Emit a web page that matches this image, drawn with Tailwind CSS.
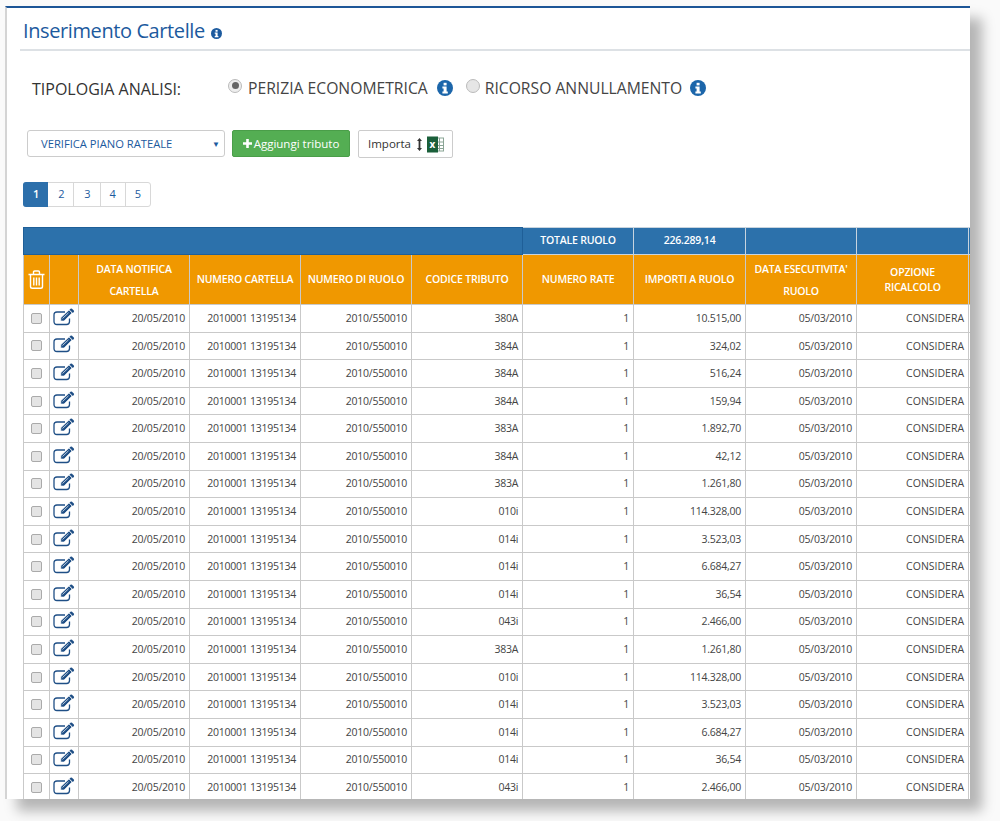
<!DOCTYPE html>
<html lang="it">
<head>
    <meta charset="UTF-8">
    <meta name="viewport" content="width=device-width, initial-scale=1.0">
    <title>Inserimento Cartelle</title>
    <script src="https://cdn.jsdelivr.net/npm/@tailwindcss/browser@4"></script>
</head>
<body class="bg-[#fafafa] h-[821px] overflow-hidden font-['Open_Sans',sans-serif] text-[#333]">

    <!-- Card -->
    <main class="ml-[5px] mt-[6px] w-[965px] h-[793px] bg-white border-l-2 border-l-[#d4d4d4] border-t-2 border-t-[#1c5596] overflow-hidden shadow-[12px_12px_12px_rgba(0,0,0,0.28)]">

        <!-- Title -->
        <header class="ml-[13px] h-[43px] border-b-2 border-[#dde1e5] flex items-center pl-[3px] pt-[5px] gap-[6px]">
            <h1 class="text-[20px] leading-none font-medium tracking-[-0.4px] text-[#1c5a9e]">Inserimento Cartelle</h1>
            <svg class="w-[11px] h-[11px] mt-[4px]" viewBox="0 0 16 16"><circle cx="8" cy="8" r="8" fill="#1c5a9e"/><rect x="6.6" y="2.8" width="3" height="2.6" fill="#fff"/><path d="M5.4 6.6h4.2v5h1.2v1.8H5.4v-1.8h1.2V8.4H5.4z" fill="#fff"/></svg>
        </header>

        <!-- Tipologia -->
        <section class="flex items-center h-[30px] mt-[23px] text-[15.7px] leading-none">
            <span class="ml-[25px] w-[196px] text-[16px] font-medium text-[#333]">TIPOLOGIA ANALISI:</span>
            <span class="w-[14px] h-[14px] -mt-[7px] rounded-full border border-[#bbb] bg-[#eee] flex items-center justify-center"><span class="w-[7px] h-[7px] rounded-full bg-[#666]"></span></span>
            <span class="ml-[6px] text-[#444]">PERIZIA ECONOMETRICA</span>
            <svg class="w-[16px] h-[16px] ml-[9px] -mt-[3px]" viewBox="0 0 16 16"><circle cx="8" cy="8" r="8" fill="#1c66aa"/><rect x="6.6" y="2.8" width="3" height="2.6" fill="#fff"/><path d="M5.4 6.6h4.2v5h1.2v1.8H5.4v-1.8h1.2V8.4H5.4z" fill="#fff"/></svg>
            <span class="ml-[13px] w-[14px] h-[14px] -mt-[7px] rounded-full border border-[#bbb] bg-[#e6e6e6]"></span>
            <span class="ml-[5px] text-[#444]">RICORSO ANNULLAMENTO</span>
            <svg class="w-[16px] h-[16px] ml-[8px] -mt-[3px]" viewBox="0 0 16 16"><circle cx="8" cy="8" r="8" fill="#1c66aa"/><rect x="6.6" y="2.8" width="3" height="2.6" fill="#fff"/><path d="M5.4 6.6h4.2v5h1.2v1.8H5.4v-1.8h1.2V8.4H5.4z" fill="#fff"/></svg>
        </section>

        <!-- Toolbar -->
        <section class="flex items-start mt-[26px] ml-[20px]">
            <div class="w-[198px] h-[27px] border border-[#ccc] rounded-[3px] flex items-center justify-between pl-[13px] pr-[4px] text-[11.2px] text-[#1c5a9e]">
                <span class="pt-[1px]">VERIFICA PIANO RATEALE</span>
                <span class="text-[8px] text-[#1c5a9e]">▼</span>
            </div>
            <button class="ml-[7px] w-[118px] h-[27px] bg-[#54ae53] border border-[#4a9e49] rounded-[2px] text-white text-[11.5px] flex items-center justify-center gap-[2px]">
                <svg class="w-[9px] h-[9px]" viewBox="0 0 9 9"><path d="M3.2 0h2.6v3.2H9v2.6H5.8V9H3.2V5.8H0V3.2h3.2z" fill="#fff"/></svg>
                Aggiungi tributo
            </button>
            <button class="ml-[8px] w-[95px] h-[28px] bg-white border border-[#ccc] rounded-[2px] text-[11.5px] text-[#333] flex items-center pl-[9px]">
                Importa
                <svg class="w-[5px] h-[13px] ml-[6px]" viewBox="0 0 5 13"><path d="M2.5 0L5 3H3.4v7H5l-2.500 3L0 10h1.600V3H0z" fill="#333"/></svg>
                <svg class="w-[17px] h-[17px] ml-[5px]" viewBox="0 0 17 17">
                    <rect x="8" y="2" width="8.500" height="13" fill="#fff" stroke="#8aa595"/>
                    <path d="M12.500 2v13M8 6h8.500M8 9.500h8.500M8 12.500h8.500" stroke="#8aa595" stroke-width="1"/>
                    <rect x="0" y="0.500" width="11" height="16" fill="#1a5f3a"/>
                    <text x="5.500" y="12" text-anchor="middle" font-size="10" font-weight="700" fill="#fff" font-family="Open Sans">x</text>
                </svg>
            </button>
        </section>

        <!-- Pagination -->
        <nav class="flex mt-[24px] ml-[16px] w-[128px] h-[25px] text-[11px] border border-[#d8d8d8] rounded-[3px] text-[#1c5a9e]">
            <a class="flex-1 bg-[#2c6fab] text-white font-semibold rounded-l-[3px] flex items-center justify-center -my-px -ml-px pl-[1px]">1</a>
            <a class="flex-1 border-r border-[#d8d8d8] flex items-center justify-center pl-[1px]">2</a>
            <a class="flex-1 border-r border-[#d8d8d8] flex items-center justify-center pl-[1px]">3</a>
            <a class="flex-1 border-r border-[#d8d8d8] flex items-center justify-center">4</a>
            <a class="flex-1 flex items-center justify-center">5</a>
        </nav>

        <!-- Table -->
        <table class="table-fixed border-collapse mt-[20px] ml-[16px] w-[948px] text-[10.5px] tracking-[-0.25px]">
            <colgroup>
                <col class="w-[26px]"><col class="w-[29px]"><col class="w-[111px]"><col class="w-[111px]"><col class="w-[111px]"><col class="w-[111px]"><col class="w-[111px]"><col class="w-[112px]"><col class="w-[111px]"><col class="w-[112px]"><col class="w-[3px]">
            </colgroup>
            <thead class="text-white font-semibold text-center text-[10.5px] tracking-[-0.2px]">
                <tr class="h-[27px] bg-[#2c71ab]">
                    <th colspan="6" class="border border-[#1f5f98]"></th>
                    <th class="border border-[#c8d4de] font-semibold">TOTALE RUOLO</th>
                    <th class="border border-[#c8d4de] font-semibold">226.289,14</th>
                    <th class="border border-[#c8d4de]"></th>
                    <th class="border border-[#c8d4de]"></th>
                    <th class="border border-[#c8d4de]"></th>
                </tr>
                <tr class="h-[50px] bg-[#f09800]">
                    <th class="border border-[#c9c9c9] p-0">
                        <svg class="w-[17px] h-[19px] mx-auto" viewBox="0 0 17 19" fill="none" stroke="#fff" stroke-width="1.400"><path d="M0.500 4.500h16M5.500 4.500V2.200q0-1.200 1.200-1.200h3.600q1.200 0 1.200 1.200v2.300M2.500 4.500v12q0 1.800 1.800 1.800h8.400q1.800 0 1.800-1.800v-12M5.800 7.500v8M8.500 7.500v8M11.200 7.500v8"/></svg>
                    </th>
                    <th class="border border-[#c9c9c9]"></th>
                    <th class="border border-[#c9c9c9] font-semibold leading-[22px]">DATA NOTIFICA<br>CARTELLA</th>
                    <th class="border border-[#c9c9c9] font-semibold">NUMERO CARTELLA</th>
                    <th class="border border-[#c9c9c9] font-semibold">NUMERO DI RUOLO</th>
                    <th class="border border-[#c9c9c9] font-semibold">CODICE TRIBUTO</th>
                    <th class="border border-[#c9c9c9] font-semibold">NUMERO RATE</th>
                    <th class="border border-[#c9c9c9] font-semibold">IMPORTI A RUOLO</th>
                    <th class="border border-[#c9c9c9] font-semibold leading-[22px]">DATA ESECUTIVITA'<br>RUOLO</th>
                    <th class="border border-[#c9c9c9] font-semibold leading-[15px]">OPZIONE<br>RICALCOLO</th>
                    <th class="border border-[#c9c9c9]"></th>
                </tr>
            </thead>
            <tbody id="righe" class="text-[#444] text-right"></tbody>
        </table>
    </main>

    <script>
        const righe = [
            ['380A', '10.515,00'], ['384A', '324,02'], ['384A', '516,24'], ['384A', '159,94'],
            ['383A', '1.892,70'], ['384A', '42,12'], ['383A', '1.261,80'], ['010i', '114.328,00'],
            ['014i', '3.523,03'], ['014i', '6.684,27'], ['014i', '36,54'], ['043i', '2.466,00'],
            ['383A', '1.261,80'], ['010i', '114.328,00'], ['014i', '3.523,03'], ['014i', '6.684,27'],
            ['014i', '36,54'], ['043i', '2.466,00']
        ];
        const td = 'border border-[#c9c9c9] pr-[4px] pt-[1px]';
        document.getElementById('righe').innerHTML = righe.map(([codice, importo]) => `
            <tr class="h-[27.6px]">
                <td class="border border-[#c9c9c9] p-0"><span class="block w-[11px] h-[11px] mx-auto rounded-[2px] border border-[#aaa] bg-[#e4e4e4]"></span></td>
                <td class="border border-[#c9c9c9] p-0">
                    <svg class="w-[22px] h-[18px] mx-auto -mt-[3px]" viewBox="0 0 22 18" fill="none">
                        <path d="M16.500 10.500v3q0 3-3 3H4q-3 0-3-3V7q0-3 3-3h8" stroke="#1f4f86" stroke-width="1.300"/>
                        <path d="M7.800 9.800L16 2l3 3-8 8H7.800z" fill="#1f4f86" stroke="#fff" stroke-width="0.600"/>
                        <path d="M17.500 0.800q0.800-0.600 1.500 0l1.800 1.800q0.600 0.700 0 1.500l-1 1-3.300-3.300z" fill="#1f4f86"/>
                        <path d="M9.500 10.500l6-5.700" stroke="#fff" stroke-width="0.700"/>
                    </svg>
                </td>
                <td class="${td}">20/05/2010</td>
                <td class="${td}">2010001 13195134</td>
                <td class="${td}">2010/550010</td>
                <td class="${td}">${codice}</td>
                <td class="${td}">1</td>
                <td class="${td}">${importo}</td>
                <td class="${td}">05/03/2010</td>
                <td class="${td} tracking-[0px]">CONSIDERA</td>
                <td class="border border-[#c9c9c9] p-0"></td>
            </tr>`).join('');
    </script>
</body>
</html>
